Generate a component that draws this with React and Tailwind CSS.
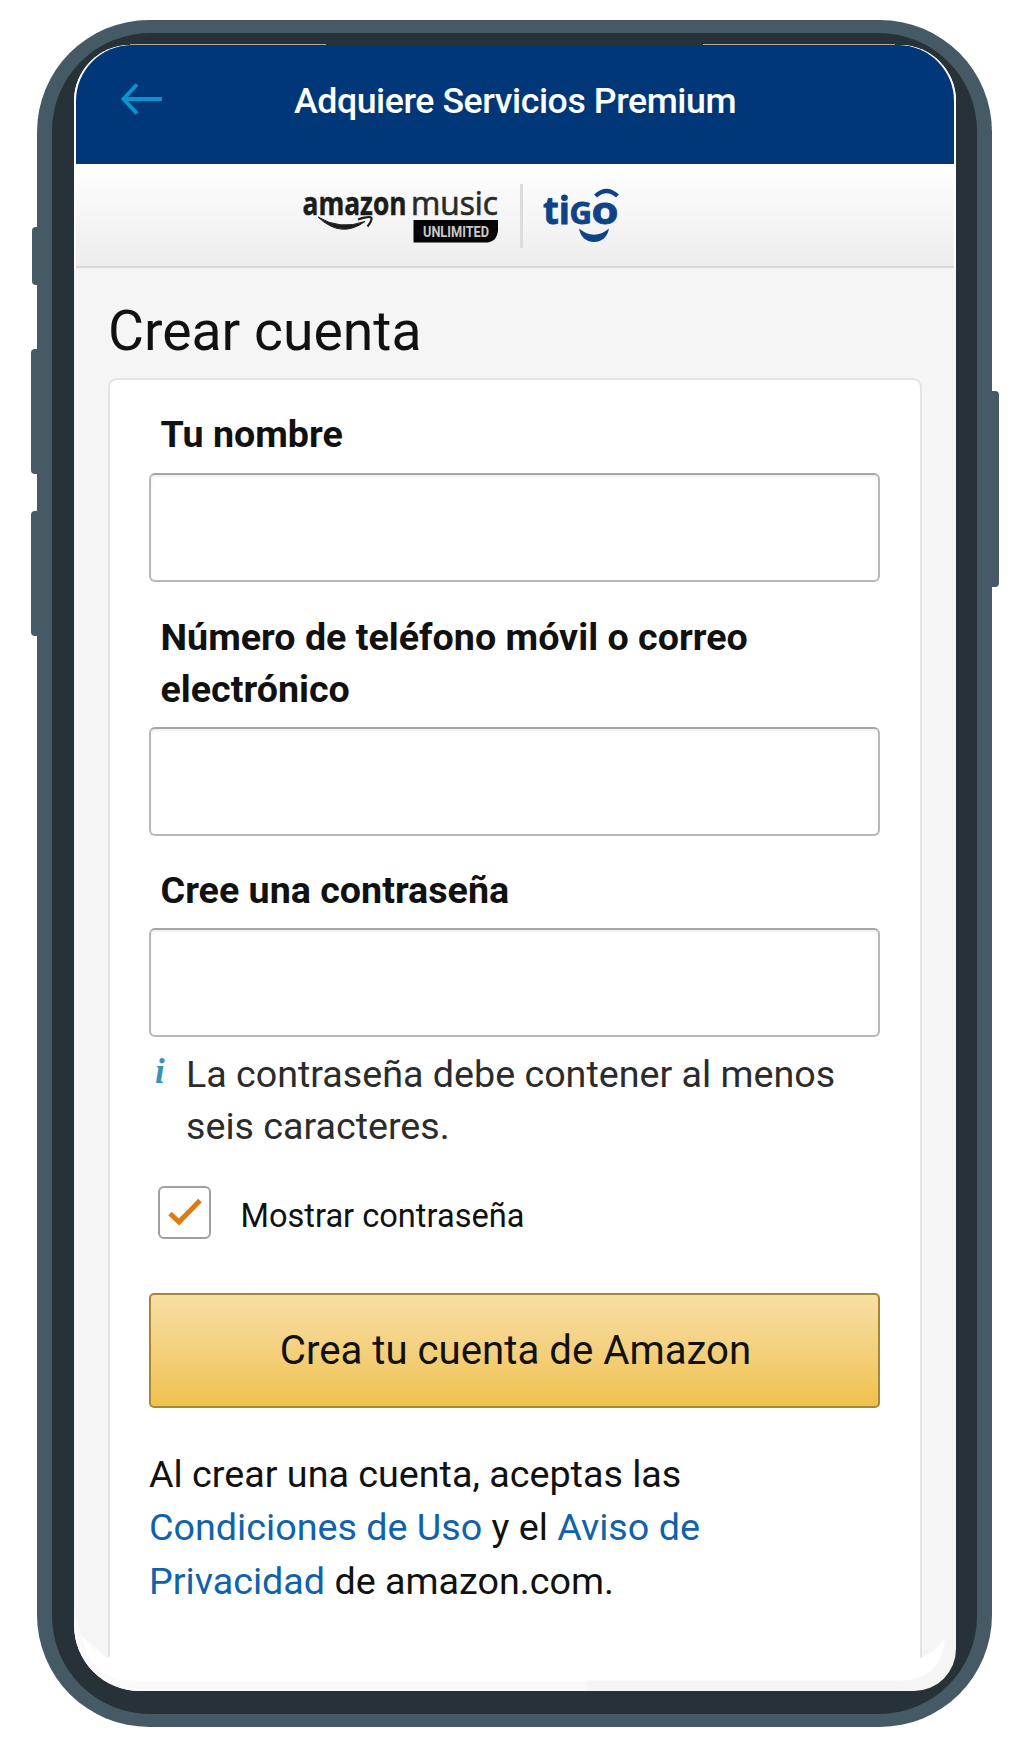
import React from "react";

function BackArrow() {
  return (
    <svg className="h-[34px] w-[44px]" viewBox="0 0 44 34" fill="none" stroke="#0b93cf" strokeWidth="4">
      <path d="M18 2.5 L4.500 17 L18 31.5" />
      <path d="M4.500 17 H43" />
    </svg>
  );
}

function AmazonMusicLogo() {
  return (
    <svg className="h-[64px] w-[200px] overflow-visible" viewBox="0 0 200 64" role="img" aria-label="amazon music unlimited">
      <text x="2.5" y="31" fontFamily="Open Sans" fontWeight="700" fontSize="33" fill="#1c1c1c" stroke="#1c1c1c" strokeWidth="0.5" textLength="104" lengthAdjust="spacingAndGlyphs">amazon</text>
      <text x="111" y="31" fontFamily="Open Sans" fontWeight="400" fontSize="33" fill="#2a2a2a" stroke="#2a2a2a" strokeWidth="0.7" textLength="87" lengthAdjust="spacingAndGlyphs">music</text>
      <path d="M18 33 Q40 46.500 65 37.500 Q41 55 18 33 Z" fill="#1c1c1c" stroke="#1c1c1c" strokeWidth="1" />
      <path d="M58 35.500 Q70 31.500 71.500 34 Q72 37 67.500 42.500" fill="none" stroke="#1c1c1c" strokeWidth="2.200" />
      <path d="M113.500 36 H198 V47 Q197 57 188 58.500 H113.500 Z" fill="#050505" />
      <text x="123" y="52.500" fontFamily="Roboto" fontWeight="700" fontSize="15" fill="#c9c9c9" textLength="66" lengthAdjust="spacingAndGlyphs">UNLIMITED</text>
    </svg>
  );
}

function TigoLogo() {
  return (
    <svg className="h-[64px] w-[80px] overflow-visible" viewBox="0 0 80 64" role="img" aria-label="tigo" fill="#0f4386">
      <g fontFamily="Open Sans" fontWeight="700" stroke="#0f4386" strokeWidth="0.8">
        <text x="0" y="39.500" fontSize="38" textLength="27" lengthAdjust="spacingAndGlyphs">ti</text>
        <text className="uppercase" x="26.500" y="39.500" fontSize="29.500" textLength="22.500" lengthAdjust="spacingAndGlyphs">g</text>
        <text x="48.500" y="39.500" fontSize="38" textLength="27" lengthAdjust="spacingAndGlyphs">o</text>
      </g>
      <path d="M52.500 12 Q63.500 2 74.500 12" fill="none" stroke="#0f4386" strokeWidth="4.200" />
      <path d="M36 44.500 Q51 57 66 44.500 Q63.500 57.500 51 58 Q38.500 57.500 36 44.500 Z" />
    </svg>
  );
}

function Field({ label, inputClass }) {
  return (
    <label className="flex flex-col">
      <span className="whitespace-nowrap pl-[11.500px] text-[37.650px] font-bold leading-[52px] text-[#111]">{label}</span>
      <input className={"h-[109px] w-full rounded-[6px] border-2 border-[#b8b8b8] border-t-[#a6a6a6] bg-white shadow-[inset_0_2px_3px_rgba(0,0,0,0.07)] outline-none " + inputClass} />
    </label>
  );
}

function ScreenBottom() {
  return (
    <svg className="pointer-events-none absolute bottom-0 left-0 h-[90px] w-[881.500px]" viewBox="0 0 881.5 90">
      <path d="M0 10 Q4 28 9 36 L34 56.500 H513 V90 H0 Z" fill="#fafafa" />
      <path d="M9 36 Q18 50 34 57 L36 55 H844 L846 57 Q862 51 871 37 Q868 79.500 826 79.500 H56 Q14 76 9 36 Z" fill="#fff" />
    </svg>
  );
}

export default function App() {
  return (
    <div className="relative h-[1755px] w-[1023px] overflow-hidden bg-white pl-[37px] pt-[19.500px] font-[Roboto,sans-serif] text-[#111]">
      <i className="absolute left-[31.500px] top-[227px] h-[58px] w-[10px] rounded-[4px] bg-[#455a64]" />
      <i className="absolute left-[30.500px] top-[349px] h-[125px] w-[10px] rounded-[4px] bg-[#455a64]" />
      <i className="absolute left-[30.500px] top-[511px] h-[125px] w-[10px] rounded-[4px] bg-[#455a64]" />
      <i className="absolute left-[988px] top-[390.500px] h-[196px] w-[10.500px] rounded-[4px] bg-[#455a64]" />
      <div className="relative h-[1707px] w-[955px] rounded-[112px] bg-[#455a64] px-[15px] pt-[13.500px]">
        <div className="h-[1680.500px] w-[925px] rounded-[98px] bg-[#263238] pl-[22px] pt-[11.500px]">
          <div className="relative flex h-[1646px] w-[881.500px] flex-col overflow-hidden rounded-[56px] rounded-bl-[66px] rounded-br-[42px] bg-[#f5f5f5]">
            <div className="shrink-0 bg-white px-[2px]">
              <header className="flex h-[119px] items-start rounded-t-[56px] bg-[#003779] pl-[43px] pt-[37px]">
                <BackArrow />
                <h1 className="-mt-[2px] ml-[131px] whitespace-nowrap text-[35.700px] font-medium leading-[42px] tracking-[-0.430px] text-white">Adquiere Servicios Premium</h1>
              </header>
              <div className="flex h-[104px] items-start border-b-2 border-[#d8d8d8] bg-linear-to-b from-white to-[#ededed] pl-[224px] pt-[20px]">
                <AmazonMusicLogo />
                <div className="ml-[20px] h-[64px] w-[3px] bg-[#dcdcdc]" />
                <div className="ml-[20px]"><TigoLogo /></div>
              </div>
            </div>
            <h2 className="mt-[32px] whitespace-nowrap pl-[34px] text-[55.300px] leading-[64px]">Crear cuenta</h2>
            <main className="mx-[34px] mt-[14px] h-[1280px] shrink-0 rounded-t-[9px] border-2 border-b-0 border-[#e4e4e4] bg-white pl-[39px] pr-[39.500px] pt-[28px]">
              <Field label="Tu nombre" inputClass="mt-[13px]" />
              <div className="mt-[29px]">
                <Field label={<>Número de teléfono móvil o correo<br />electrónico</>} inputClass="mt-[12px]" />
              </div>
              <div className="mt-[28.500px]">
                <Field label="Cree una contraseña" inputClass="mt-[12px]" />
              </div>
              <div className="mt-[10.500px] flex text-[37.650px] leading-[52px] text-[#2b2b2b]">
                <span className="w-[37px] pl-[6px] font-[Liberation_Serif,serif] text-[35px] font-bold italic leading-[48px] text-[#3a93b5]">i</span>
                <p className="whitespace-nowrap">La contraseña debe contener al menos<br />seis caracteres.</p>
              </div>
              <label className="mt-[34px] flex h-[53px] items-center pl-[9px]">
                <span className="flex h-[53px] w-[53px] items-center justify-center rounded-[6px] border-2 border-[#a0a0a0]">
                  <svg className="h-[30px] w-[36px]" viewBox="0 0 36 30" fill="none" stroke="#dd7c10" strokeWidth="5"><path d="M3 16.500 L12 25 L33 3.500" /></svg>
                </span>
                <span className="ml-[29.500px] pt-[8px] text-[32.600px]">Mostrar contraseña</span>
              </label>
              <button className="mt-[54.500px] h-[115px] w-full rounded-[5px] border-2 border-[#a88734] bg-linear-to-b from-[#f7dfa5] to-[#f0c14b] pl-[2px] pt-[2px] text-[40.200px]">Crea tu cuenta de Amazon</button>
              <p className="mt-[39.500px] whitespace-nowrap text-[37.700px] leading-[53.500px]">
                Al crear una cuenta, aceptas las<br />
                <a className="text-[#0f62ab]">Condiciones de Uso</a> y el <a className="text-[#0f62ab]">Aviso de<br />Privacidad</a> de amazon.com.
              </p>
            </main>
            <ScreenBottom />
          </div>
        </div>
      </div>
      <i className="absolute left-[130px] top-[43.500px] h-px w-[196px] bg-[#a9a9a2]" />
      <i className="absolute left-[703px] top-[43.500px] h-px w-[192px] bg-[#a9a9a2]" />
    </div>
  );
}
